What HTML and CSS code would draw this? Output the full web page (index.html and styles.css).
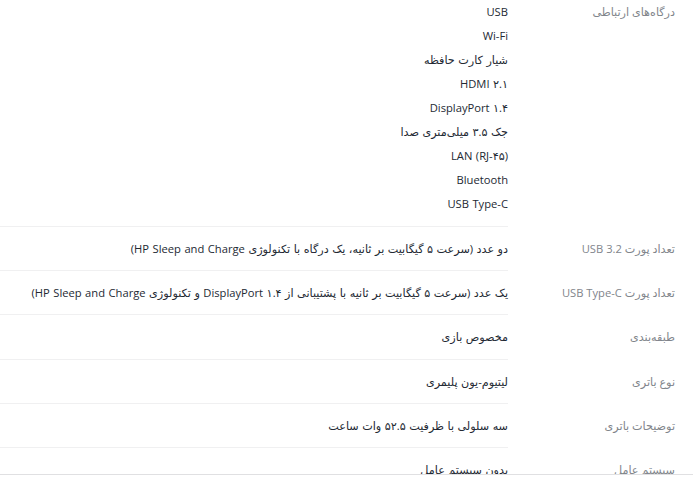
FILE: index.html
```html
<!DOCTYPE html>
<html lang="fa" dir="rtl">
<head>
  <meta charset="UTF-8">
  <meta name="viewport" content="width=device-width, initial-scale=1.0">
  <title>مشخصات</title>
  <link rel="stylesheet" href="styles.css">
</head>
<body>

<div class="specs">
  <div class="spec-row spec-row-list">
    <div class="spec-label">درگاه‌های ارتباطی</div>
    <div class="spec-value">
      <p>USB</p>
      <p>Wi-Fi</p>
      <p>شیار کارت حافظه</p>
      <p>HDMI ۲.۱</p>
      <p>DisplayPort ۱.۴</p>
      <p>جک ۳.۵ میلی‌متری صدا</p>
      <p>LAN (RJ-۴۵)</p>
      <p>Bluetooth</p>
      <p>USB Type-C</p>
    </div>
  </div>
  <div class="spec-row">
    <div class="spec-label">تعداد پورت USB 3.2</div>
    <div class="spec-value">
      <p>دو عدد (سرعت ۵ گیگابیت بر ثانیه، یک درگاه با تکنولوژی HP Sleep and Charge)</p>
    </div>
  </div>
  <div class="spec-row">
    <div class="spec-label">تعداد پورت USB Type-C</div>
    <div class="spec-value">
      <p>یک عدد (سرعت ۵ گیگابیت بر ثانیه با پشتیبانی از DisplayPort ۱.۴ و تکنولوژی HP Sleep and Charge)</p>
    </div>
  </div>
  <div class="spec-row">
    <div class="spec-label">طبقه‌بندی</div>
    <div class="spec-value">
      <p>مخصوص بازی</p>
    </div>
  </div>
  <div class="spec-row">
    <div class="spec-label">نوع باتری</div>
    <div class="spec-value">
      <p>لیتیوم-یون پلیمری</p>
    </div>
  </div>
  <div class="spec-row">
    <div class="spec-label">توضیحات باتری</div>
    <div class="spec-value">
      <p>سه سلولی با ظرفیت ۵۲.۵ وات ساعت</p>
    </div>
  </div>
  <div class="spec-row">
    <div class="spec-label">سیستم عامل</div>
    <div class="spec-value">
      <p>بدون سیستم عامل</p>
    </div>
  </div>
</div>

<div class="bottom-bar"></div>

</body>
</html>
```

FILE: styles.css
```css
body {
  margin: 0;
  font-family: "Open Sans", "DejaVu Sans", sans-serif;
  font-size: 11.2px;
  direction: rtl;
  background: #fff;
  overflow: hidden;
}
.specs {
  padding: 0 18px 0 0;
}
.spec-row {
  display: flex;
}
.spec-label {
  width: 167px;
  flex-shrink: 0;
  color: #81858b;
  line-height: 24px;
  padding: 10px 0 9.2px;
}
.spec-value {
  flex: 1;
  color: #232933;
  word-spacing: 0.6px;
  border-bottom: 1px solid #f0f0f1;
  padding: 10px 0 9.2px;
}
.spec-value p {
  margin: 0;
  line-height: 24px;
}
.spec-row-list .spec-label {
  padding-top: 0;
}
.spec-row-list .spec-value {
  padding: 0 0 10px;
}

.bottom-bar {
  position: fixed;
  left: 0;
  right: 0;
  bottom: 0;
  height: 3px;
  background: #fff;
  border-top: 1px solid #e0e0e2;
}
```
